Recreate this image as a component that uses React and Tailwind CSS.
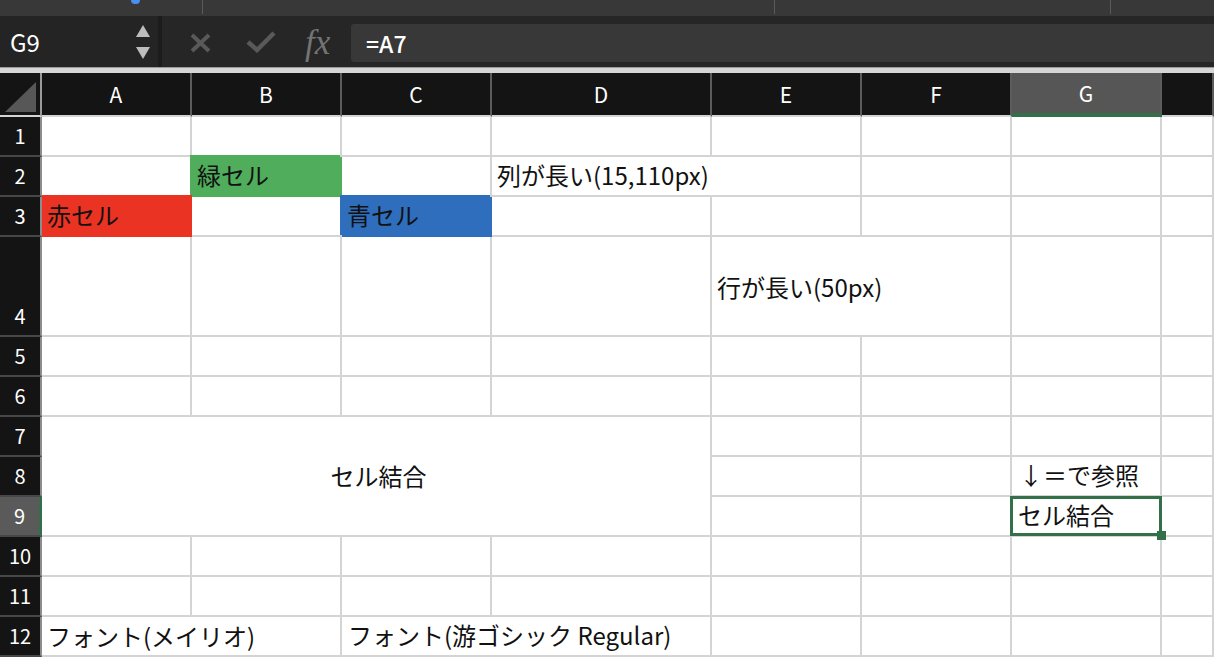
import React from 'react';

const cellBase =
  'border-r-2 border-b-2 flex pl-[5px] text-[24px] leading-none text-[#111] whitespace-nowrap overflow-hidden';

function Cell({ fill = 'bg-white border-[#d4d4d4]', className = '', children }) {
  return <div className={`${cellBase} ${fill} ${className}`}>{children}</div>;
}

function RowHead({ n, active = false }) {
  return (
    <div
      className={`flex items-end justify-center pb-[9px] text-[20px] leading-none text-white border-b-2 border-b-[#474747] ${
        active ? 'bg-[#5a5a5a] border-r-[3px] border-r-[#33704a]' : 'bg-[#141414] border-r-2 border-r-[#8c8c8c]'
      }`}
    >
      {n}
    </div>
  );
}

function ColHead({ label, active = false }) {
  return (
    <div
      className={`flex items-center justify-center text-[21px] leading-none text-white border-r-2 border-r-[#5c5c5c] ${
        active ? 'bg-[#565656] border-b-4 border-b-[#33704a]' : 'bg-[#141414] border-b-2 border-b-[#d4d4d4]'
      }`}
    >
      {label}
    </div>
  );
}

export default function App() {
  return (
    <div className="w-[1214px] h-[658px] overflow-hidden bg-white font-['Noto_Sans_CJK_JP','Noto_Sans',sans-serif]">
      {/* ===== タイトルバー ===== */}
      <div className="h-[16px] bg-[#383838] flex items-start">
        <div className="w-[203px] h-[14px] border-r border-[#5a5a5a] flex">
          <div className="ml-[131px] -mt-[4px] w-[9px] h-[8px] rounded-full bg-[#4a8ff0]"></div>
        </div>
        <div className="w-[572px] h-[14px] border-r border-[#5a5a5a]"></div>
        <div className="w-[336px] h-[14px] border-r border-[#5a5a5a]"></div>
      </div>

      {/* ===== 数式バー ===== */}
      <div className="h-[51px] bg-[#262626] flex">
        <div className="w-[158px] flex items-center justify-between pl-[10px] pr-[8px] bg-[#242424]">
          <span className="text-white text-[24px] leading-none">G9</span>
          <div className="flex flex-col gap-[10px] pt-[1px]">
            <svg width="14" height="12" viewBox="0 0 14 12">
              <polygon points="7,0 14,12 0,12" fill="#bdbdbd" />
            </svg>
            <svg width="14" height="12" viewBox="0 0 14 12">
              <polygon points="0,0 14,0 7,12" fill="#bdbdbd" />
            </svg>
          </div>
        </div>
        <div className="w-[4px] bg-[#1c1c1c]"></div>
        <div className="w-[189px] flex items-center pl-[28px]">
          <svg width="21" height="20" viewBox="0 0 21 20" className="mt-[3px]">
            <path d="M2 2 L19 18 M19 2 L2 18" stroke="#595959" strokeWidth="4" fill="none" />
          </svg>
          <svg width="30" height="22" viewBox="0 0 30 22" className="ml-[35px] mt-[1px]">
            <path d="M2 11 L11 19 L28 2" stroke="#595959" strokeWidth="4.5" fill="none" />
          </svg>
          <span className="ml-[29px] mt-[1px] text-[35px] leading-none italic text-[#747474] font-['Liberation_Serif',serif]">
            fx
          </span>
        </div>
        <div className="flex-1 pt-[8px] pb-[5px]">
          <div className="h-full bg-[#383838] rounded-l-[3px] flex items-center pl-[15px]">
            <span className="text-white text-[23px] leading-none font-medium">=A7</span>
          </div>
        </div>
      </div>

      <div className="h-[6px] bg-[#d6d6d6] border-t border-[#9a9a9a]"></div>

      {/* ===== シート ===== */}
      <div className="grid grid-cols-[42px_150px_150px_150px_220px_150px_150px_150px_1fr] grid-rows-[44px_40px_40px_40px_100px_40px_40px_40px_40px_40px_40px_40px_40px]">
        {/* 列見出し */}
        <div className="bg-[#141414] border-r-2 border-r-[#9a9a9a] border-b-2 border-b-[#d4d4d4] flex items-end justify-end pr-[4px] pb-[3px]">
          <svg width="31" height="30" viewBox="0 0 31 30">
            <polygon points="31,0 31,30 0,30" fill="#575757" />
          </svg>
        </div>
        <ColHead label="A" />
        <ColHead label="B" />
        <ColHead label="C" />
        <ColHead label="D" />
        <ColHead label="E" />
        <ColHead label="F" />
        <ColHead label="G" active />
        <ColHead label="" />

        {/* 1 */}
        <RowHead n="1" />
        <Cell /><Cell /><Cell /><Cell /><Cell /><Cell /><Cell /><Cell />

        {/* 2 */}
        <RowHead n="2" />
        <Cell />
        <Cell fill="bg-[#4fad5b] border-[#4fad5b] shadow-[-2px_-2px_0_0_#4fad5b]" className="items-end pb-[8px]">
          緑セル
        </Cell>
        <Cell />
        <Cell className="col-span-2 items-end pb-[8px]">列が長い(15,110px)</Cell>
        <Cell /><Cell /><Cell />

        {/* 3 */}
        <RowHead n="3" />
        <Cell fill="bg-[#ea3323] border-[#ea3323] shadow-[0_-2px_0_0_#ea3323]" className="items-end pb-[8px]">
          赤セル
        </Cell>
        <Cell />
        <Cell fill="bg-[#2f6ebd] border-[#2f6ebd] shadow-[-2px_-2px_0_0_#2f6ebd]" className="items-end pb-[8px]">
          青セル
        </Cell>
        <Cell /><Cell /><Cell /><Cell /><Cell />

        {/* 4 */}
        <RowHead n="4" />
        <Cell /><Cell /><Cell /><Cell />
        <Cell className="col-span-2 items-center pt-[2px]">行が長い(50px)</Cell>
        <Cell /><Cell />

        {/* 5, 6 */}
        <RowHead n="5" />
        <Cell /><Cell /><Cell /><Cell /><Cell /><Cell /><Cell /><Cell />
        <RowHead n="6" />
        <Cell /><Cell /><Cell /><Cell /><Cell /><Cell /><Cell /><Cell />

        {/* 7 - 9 */}
        <RowHead n="7" />
        <Cell className="col-span-4 row-span-3 items-center justify-center pl-0">セル結合</Cell>
        <Cell /><Cell /><Cell /><Cell />
        <RowHead n="8" />
        <Cell /><Cell />
        <Cell className="items-end pb-[8px] pl-[7px]">↓＝で参照</Cell>
        <Cell />
        <RowHead n="9" active />
        <Cell /><Cell />
        <Cell className="relative overflow-visible items-end pb-[8px] pl-[6px]">
          セル結合
          <div className="absolute -left-[2px] -right-[2px] -top-[1px] -bottom-[1px] border-[3px] border-[#33704a] z-10"></div>
          <div className="absolute -right-[6px] -bottom-[5px] w-[9px] h-[9px] bg-[#33704a] z-10"></div>
        </Cell>
        <Cell />

        {/* 10, 11 */}
        <RowHead n="10" />
        <Cell /><Cell /><Cell /><Cell /><Cell /><Cell /><Cell /><Cell />
        <RowHead n="11" />
        <Cell /><Cell /><Cell /><Cell /><Cell /><Cell /><Cell /><Cell />

        {/* 12 */}
        <RowHead n="12" />
        <Cell className="col-span-2 items-end pb-[7px] text-[24px]">フォント(メイリオ)</Cell>
        <Cell className="col-span-2 items-end pb-[8px] pl-[6px] text-[23px]">
          フォント(游ゴシック Regular)
        </Cell>
        <Cell /><Cell /><Cell /><Cell />
      </div>
    </div>
  );
}
